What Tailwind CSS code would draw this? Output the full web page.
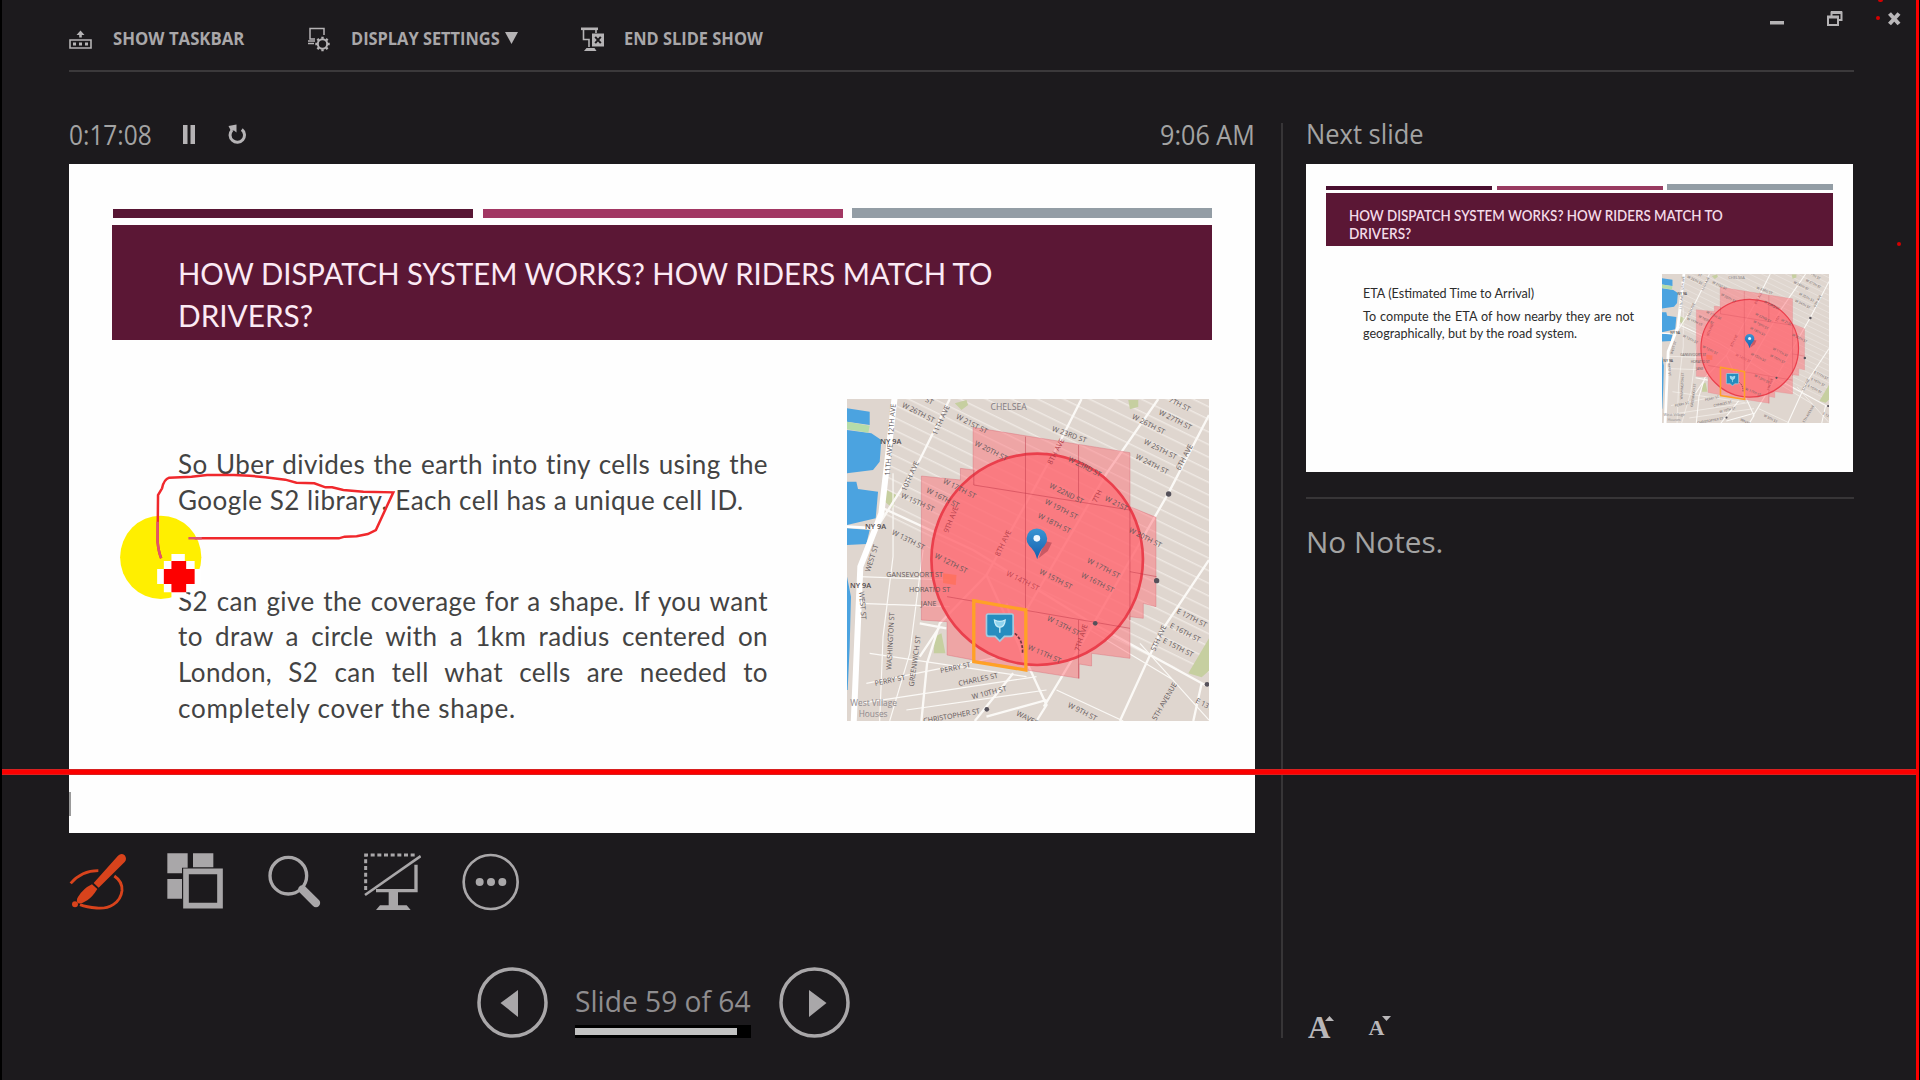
<!DOCTYPE html>
<html lang="en">
<head>
<meta charset="utf-8">
<title>Presenter View</title>
<script src="https://cdn.jsdelivr.net/npm/@tailwindcss/browser@4"></script>
</head>
<body class="bg-[#1c1a1d]">
<div class="relative flex h-[1080px] w-[1920px] flex-col overflow-hidden border-l-2 border-black bg-[#1c1a1d] pl-[67px] font-['Open_Sans',sans-serif] text-[#a3a3a3]">

  <!-- Toolbar -->
  <header class="flex h-[72px] w-[1785px] shrink-0 items-start border-b-2 border-[#3b393b] pt-[26px] text-[18px] leading-[24px] font-bold text-[#a9a7a9]">
    <div class="flex w-[238px] items-start">
      <svg class="mr-[21px] h-[26px] w-[23px]" viewBox="0 0 23 26" fill="none" stroke="#b5b3b5" stroke-width="1.6"><path d="M1 14h21v8H1z"/><path d="M4 16.500h3v3H4zM10 16.500h3v3h-3zM16 16.500h3v3h-3z" fill="#b5b3b5" stroke="none"/><path d="M11.500 4.500l4 4.500h-2.700v2.500h-2.600V9H7.500z" fill="#b5b3b5" stroke="none"/></svg>
      <span class="origin-left scale-x-[0.93] whitespace-nowrap">SHOW TASKBAR</span>
    </div>
    <div class="flex w-[274px] items-start">
      <svg class="mr-5 h-[26px] w-[24px]" viewBox="0 0 24 26" fill="none" stroke="#b5b3b5" stroke-width="1.500"><path d="M8 13H3V2.500h14V9"/><path d="M1 15h7M1 17.500h6" /><circle cx="15.500" cy="18" r="4.700" stroke-width="2"/><path d="M15.500 10.800v2M15.500 23.200v2M8.300 18h2M20.700 18h2M10.400 12.900l1.500 1.500M19.100 21.600l1.500 1.500M10.400 23.100l1.500-1.500M19.100 14.400l1.500-1.500" stroke-width="2.400"/></svg>
      <span class="w-[148px] origin-left scale-x-[0.91] whitespace-nowrap">DISPLAY SETTINGS</span>
      <svg class="mt-[6px] ml-[6px] h-3 w-[13px]" viewBox="0 0 13 12"><path d="M0 0h13L6.500 12z" fill="#b5b3b5"/></svg>
    </div>
    <div class="flex items-start">
      <svg class="mr-[19px] h-[26px] w-[24px]" viewBox="0 0 24 26" fill="none" stroke="#b5b3b5" stroke-width="1.600"><path d="M0 2.800h17" stroke-width="2.600"/><path d="M2.500 4v9.500H8V21M15 4v3"/><path d="M3 25l2.500-3h8l2 3z" fill="#b5b3b5" stroke="none"/><path d="M11 7.500h12v13H11z" fill="#b5b3b5" stroke="none"/><path d="M14.200 10.800l5.600 6.400M19.800 10.800l-5.600 6.400" stroke="#1c1a1d" stroke-width="2"/></svg>
      <span class="origin-left scale-x-[0.912] whitespace-nowrap">END SLIDE SHOW</span>
    </div>
  </header>

  <div class="flex">
    <!-- Current slide -->
    <main class="w-[1186px] shrink-0 pt-[51px]">
      <div class="flex h-[41px] items-start text-[27px] leading-[23px]">
        <span class="w-[114px] origin-left scale-x-[0.905] whitespace-nowrap">0:17:08</span>
        <svg class="mt-[2px] h-5 w-3" viewBox="0 0 12 20"><path d="M0 0h4.500v19H0zM7.500 0H12v19H7.500z" fill="#b5b3b5"/></svg>
        <svg class="mt-[1px] ml-[33px] h-[21px] w-[18px]" viewBox="0 0 18 21" fill="none" stroke="#b5b3b5" stroke-width="3"><path d="M13.800 5.500A7.200 7.200 0 1 1 4 6.200"/><path d="M0.500 2L8.500 0.500V8.500L6 6.500 3 7z" fill="#b5b3b5" stroke="none"/></svg>
        <span class="ml-auto origin-right scale-x-[0.93] whitespace-nowrap">9:06 AM</span>
      </div>

      <section class="h-[669px] bg-[#fefefe] pt-[44px] font-[Lato,sans-serif]">
        <div class="ml-[44px] flex h-[10px] w-[1099px] items-end justify-between">
          <div class="h-[9px] w-[360px] bg-[#581634]"></div>
          <div class="h-[9px] w-[360px] bg-[#a23763]"></div>
          <div class="h-[10px] w-[360px] bg-[#939da5]"></div>
        </div>
        <h1 class="mt-[7px] ml-[43px] h-[115px] w-[1100px] bg-[#5b1735] pt-[27px] pl-[66px] text-[31.500px] leading-[42px] text-[#fbeaf4]">
          <span class="block origin-left scale-x-[0.93] whitespace-nowrap">HOW DISPATCH SYSTEM WORKS? HOW RIDERS MATCH TO</span>
          <span class="block origin-left scale-x-[0.945] whitespace-nowrap">DRIVERS?</span>
        </h1>
        <div class="flex pl-[109px]">
          <div class="w-[590px] pt-[107px] text-[26px] leading-[35.800px] text-[#434343]">
            <p><span class="block tracking-[0.400px] whitespace-nowrap [text-align-last:justify]">So Uber divides the earth into tiny cells using the</span><span class="block tracking-[0.490px] whitespace-nowrap">Google S2 library. Each cell has a unique cell ID.</span></p>
            <p class="pt-[65px] tracking-[0.400px]"><span class="block whitespace-nowrap [text-align-last:justify]">S2 can give the coverage for a shape. If you want</span><span class="block [text-align-last:justify]">to draw a circle with a 1km radius centered on</span><span class="block [text-align-last:justify]">London, S2 can tell what cells are needed to</span><span class="block tracking-[0.760px] whitespace-nowrap">completely cover the shape.</span></p>
          </div>
          <svg class="mt-[59px] ml-[79px] h-[322px] w-[362px]" viewBox="22 27 1085 966" preserveAspectRatio="none">
            <defs>
              <linearGradient id="pin" x1="0" y1="0" x2="0" y2="1"><stop offset="0" stop-color="#3a95d3"/><stop offset="1" stop-color="#165fae"/></linearGradient>
              <pattern id="blocks" width="150" height="34" patternUnits="userSpaceOnUse" patternTransform="rotate(26)"><path d="M0 2H150" stroke="#efe9e4" stroke-width="4"/></pattern>
              <g id="map">
                <path fill="#dfd6cf" d="M22 27H1107V993H22z"/>
                <path fill="url(#blocks)" d="M165 27H1107V870L560 660L120 380z"/>
                <path fill="#4ba3e0" d="M22 55l68 10v40l-68-10zM22 120l73 10 30 20-5 65-20 25-78 10zM22 275h28l5 22 60 8-7 80-86 20zM22 415l68 5-10 42-58 3zM22 560l12 60-4 150-6 130h-2z"/>
                <path fill="#b5dca9" d="M22 95l68 12-4 21-64-10z"/>
                <path fill="#c6cfa0" d="M140 300l30 15-10 40-25-20zM285 740l20-10 12 60h-35zM1107 745l-62 105 40 12 22-20zM345 40l35-10 5 15-20 15zM865 30h30v20l-25 8z"/>
                <g fill="none" stroke="#fbf9f6" stroke-width="7">
                  <path d="M245 993L262 820 300 700 440 555 655 165 725 27M560 840L500 640M440 555L620 945 590 993M560 660L800 250 955 27M612 950L750 720 985 310 1107 75M840 993L960 730 1107 510M330 27L240 210 120 400M120 350L400 480 740 690 1095 885M1085 880L1060 993M240 700L320 715M300 710L240 800M405 993L520 850M440 980L620 930" />
                  <path d="M160 250V500L130 740 120 993M250 480L210 790 150 993M60 560L330 570M60 640L330 650M90 790L560 860M80 880L480 800M60 940L590 860M200 960L620 900M650 900L850 993M750 720L1000 870M900 760L1107 990" stroke-width="3.500"/>
                  <path d="M165 20L125 370 62 530 42 1000" stroke="#fff" stroke-width="18"/>
                  <path d="M22 410L110 415" stroke="#fff" stroke-width="8"/>
                </g>
                <path fill="#ff6b74" fill-opacity=".46" stroke="#d96873" stroke-opacity=".6" stroke-width="2" d="M400 112L870 188V350L948 382V650L910 640V685L870 680V805L755 790V828L718 822V865L560 840 322 795V695L245 690V258L362 270V235L400 240z"/>
                <circle cx="592" cy="508" r="317" fill="#ff6a72" fill-opacity=".7" stroke="#ea3f4c" stroke-width="8"/>
                <path d="M557 140V660M402 285L870 360M716 165V330M402 240V285M322 620L870 715M716 690V865M870 350V690M870 545L950 560" fill="none" stroke="#b93445" stroke-width="2" stroke-opacity=".7"/>
                <path fill="#ff6f55" fill-opacity=".7" d="M310 550l40 5-2 30-38-6z"/>
                <g font-family="Open Sans, sans-serif" font-size="21.500" fill="#5f585a">
                  <text transform="translate(185 50) rotate(27)">W 26TH ST</text><text transform="translate(255 34) rotate(27)">ST</text>
                  <text transform="translate(347 85) rotate(27)">W 21ST ST</text><text transform="translate(403 165) rotate(27)">W 20TH ST</text>
                  <text transform="translate(635 122) rotate(20)">W 23RD ST</text><text transform="translate(875 85) rotate(27)">W 26TH ST</text>
                  <text transform="translate(955 72) rotate(27)">W 27TH ST</text><text transform="translate(985 34) rotate(27)">7TH ST</text>
                  <text transform="translate(910 160) rotate(27)">W 25TH ST</text><text transform="translate(885 205) rotate(27)">W 24TH ST</text>
                  <text transform="translate(308 278) rotate(27)">W 17TH ST</text><text transform="translate(258 306) rotate(27)">W 16TH ST</text>
                  <text transform="translate(182 322) rotate(24)">W 15TH ST</text><text transform="translate(155 432) rotate(27)">W 13TH ST</text>
                  <text transform="translate(283 502) rotate(27)">W 12TH ST</text><text transform="translate(627 292) rotate(27)">W 22ND ST</text>
                  <text transform="translate(613 340) rotate(27)">W 19TH ST</text><text transform="translate(592 382) rotate(27)">W 18TH ST</text>
                  <text transform="translate(683 212) rotate(27)">W 23RD ST</text><text transform="translate(793 330) rotate(27)">W 21ST</text>
                  <text transform="translate(865 425) rotate(27)">W 20TH ST</text><text transform="translate(740 517) rotate(27)">W 17TH ST</text>
                  <text transform="translate(722 560) rotate(27)">W 16TH ST</text><text transform="translate(597 550) rotate(27)">W 15TH ST</text>
                  <text transform="translate(498 555) rotate(27)" fill="#c04450">W 14TH ST</text><text transform="translate(620 690) rotate(27)">W 13TH ST</text>
                  <text transform="translate(562 777) rotate(24)">W 11TH ST</text><text x="140" y="560">GANSEVOORT ST</text>
                  <text x="208" y="605">HORATIO ST</text><text x="243" y="648">JANE</text>
                  <text transform="translate(303 850) rotate(-12)">PERRY ST</text><text transform="translate(107 888) rotate(-12)">PERRY ST</text>
                  <text transform="translate(358 888) rotate(-12)">CHARLES ST</text><text transform="translate(398 928) rotate(-14)">W 10TH ST</text>
                  <text transform="translate(252 1000) rotate(-10)">CHRISTOPHER ST</text><text transform="translate(682 950) rotate(27)">W 9TH ST</text>
                  <text transform="translate(528 975) rotate(27)">WAVERLY</text><text transform="translate(1008 668) rotate(27)">E 17TH ST</text>
                  <text transform="translate(988 712) rotate(27)">E 16TH ST</text><text transform="translate(967 757) rotate(27)">E 15TH ST</text>
                  <text transform="translate(1065 937) rotate(27)">E 13TH</text><text transform="translate(155 840) rotate(-87)">WASHINGTON ST</text>
                  <text transform="translate(222 890) rotate(-82)">GREENWICH ST</text><text transform="translate(90 547) rotate(-72)">WEST ST</text>
                  <text transform="translate(58 605) rotate(85)">WEST ST</text><text transform="translate(150 258) rotate(-85)">11TH AVE</text>
                  <text transform="translate(160 138) rotate(-85)">12TH AVE</text><text transform="translate(290 137) rotate(-65)">11TH AVE</text>
                  <text transform="translate(198 305) rotate(-65)">10TH AVE</text><text transform="translate(1020 242) rotate(-62)">6TH AVE</text>
                  <text transform="translate(945 785) rotate(-65)">5TH AVE</text><text transform="translate(948 993) rotate(-60)">5TH AVENUE</text>
                  <g fill="#b23d49"><text transform="translate(635 225) rotate(-62)">8TH AVE</text><text transform="translate(325 430) rotate(-68)">9TH AVE</text><text transform="translate(478 500) rotate(-64)">8TH AVE</text><text transform="translate(770 340) rotate(-64)">7TH</text><text transform="translate(718 785) rotate(-72)">7TH AVE</text></g>
                  <text x="452" y="60" font-size="26" fill="#7f7a80">CHELSEA</text>
                  <g font-weight="600" fill="#4f4a4d" font-size="22"><text x="122" y="162">NY 9A</text><text x="76" y="417">NY 9A</text><text x="31" y="595">NY 9A</text></g>
                  <g font-size="25" fill="#8d888c"><text x="32" y="949">West Village</text><text x="57" y="982">Houses</text></g>
                </g>
                <path d="M525 730Q550 750 548 790" stroke="#73363f" stroke-width="5" stroke-dasharray="9 5" fill="none"/>
                <g fill="#55515a"><circle cx="986" cy="312" r="8"/><circle cx="950" cy="572" r="8"/><circle cx="766" cy="700" r="7"/><circle cx="441" cy="958" r="7"/><circle cx="1101" cy="883" r="7"/></g>
                <path fill="none" stroke="#ffa126" stroke-width="10" d="M402 632L558 660V840L402 815z"/>
                <path d="M445 672h70q5 0 5 5v54q0 8-8 8h-18l-14 14-14-14h-18q-8 0-8-8v-54q0-5 5-5z" fill="#268dbf" stroke="#a4cbe0" stroke-width="5"/>
                <path d="M464 690q16 8 32 0-1 20-16 22-15-2-16-22zM480 710v18" fill="#8ed3ee" stroke="#c9edf8" stroke-width="4"/>
                <path d="M596 505l28-22 12-25-20-5z" fill="#a33c4a" fill-opacity=".55"/>
                <path d="M592 508Q586 482 568 467A31 31 0 1 1 614 467Q598 484 592 508z" fill="url(#pin)"/>
                <circle cx="591" cy="445" r="10" fill="#f1f8ff"/>
              </g>
            </defs>
            <use href="#map"/>
          </svg>
        </div>
      </section>

      <!-- Slide tools -->
      <div class="flex gap-10 pt-[20px]">
        <svg class="size-[58px]" viewBox="27 339 174 174" fill="none"><path d="M32 430Q65 392 115 392M163 408Q188 425 186 452C182 490 145 508 110 504Q80 502 60 494" stroke="#d8431c" stroke-width="8.500"/><path d="M101 429L174 347Q184 338 194 346 202 356 194 366L116 443zM96 433L112 447Q98 470 82 481 66 492 54 490 47 482 54 471 70 445 96 433z" fill="#d8431c"/><circle cx="45" cy="493" r="9" fill="#d8431c"/></svg>
        <svg class="size-[58px]" viewBox="321 339 174 174"><path d="M322 340h61v43h-17v17h-44zM399 340h61v42h-61zM322 417h44v59h-44z" fill="#a9a7a9"/><path d="M378 394h102v103H378z" fill="none" stroke="#a9a7a9" stroke-width="17"/></svg>
        <svg class="size-[58px]" viewBox="615 339 174 174" fill="none" stroke="#a9a7a9"><circle cx="685" cy="407" r="55" stroke-width="10"/><path d="M727 448L768 489" stroke-width="25" stroke-linecap="round"/></svg>
        <svg class="size-[58px]" viewBox="909 339 174 174" fill="none" stroke="#a9a7a9"><path d="M917 450V345H1072" stroke-width="9" stroke-dasharray="12 8"/><path d="M915 465L1082 348" stroke-width="8"/><path d="M1068 374V452H948" stroke-width="10"/><path d="M986 452h28v44h26l12 14H948l12-14h26z" fill="#a9a7a9" stroke="none"/></svg>
        <svg class="size-[58px]" viewBox="1203 339 174 174"><circle cx="1292" cy="426" r="81" fill="none" stroke="#a9a7a9" stroke-width="8"/><g fill="#a9a7a9"><circle cx="1259" cy="426" r="12"/><circle cx="1293" cy="426" r="12"/><circle cx="1327" cy="426" r="12"/></g></svg>
      </div>

      <!-- Slide navigation -->
      <div class="ml-[408px] flex pt-[56px]">
        <svg class="size-[71px]" viewBox="0 0 71 71"><circle cx="35.500" cy="35.500" r="33.500" fill="none" stroke="#a9a7a9" stroke-width="3.500"/><path d="M23.500 36L41 23v27z" fill="#a9a7a9"/></svg>
        <div class="ml-[27px] w-[176px] pt-[14px]">
          <div class="origin-left scale-x-[0.955] text-[29.500px] leading-[39px] whitespace-nowrap text-[#8f8d8f]">Slide 59 of 64</div>
          <div class="mt-[5px] h-[13px] bg-black py-[3px]"><div class="h-[7px] bg-[#c2c2c2]" style="width:92.2%"></div></div>
        </div>
        <svg class="ml-[28px] size-[71px]" viewBox="0 0 71 71"><circle cx="35.500" cy="35.500" r="33.500" fill="none" stroke="#a9a7a9" stroke-width="3.500"/><path d="M47.500 36L30 23v27z" fill="#a9a7a9"/></svg>
      </div>
    </main>

    <!-- Next slide and notes -->
    <aside class="mt-[51px] ml-[26px] flex h-[915px] w-[573px] flex-col border-l-2 border-[#373537] pl-[23px]">
      <div class="h-[41px] origin-left scale-x-[0.945] text-[27px] leading-[22px] whitespace-nowrap">Next slide</div>
      <section class="h-[308px] w-[547px] shrink-0 bg-[#fefefe] pt-[20px] font-[Lato,sans-serif]">
        <div class="ml-[20px] flex h-[6px] w-[507px] items-end justify-between">
          <div class="h-[4px] w-[166px] bg-[#4a1030]"></div>
          <div class="h-[4px] w-[166px] bg-[#983a60]"></div>
          <div class="h-[6px] w-[166px] bg-[#939da5]"></div>
        </div>
        <h2 class="mt-[3px] ml-[20px] h-[53px] w-[507px] bg-[#5b1735] pt-[14px] pl-[23px] text-[14.300px] leading-[18.300px] font-semibold text-[#f3dbe8]">
          <span class="block origin-left scale-x-[0.935] whitespace-nowrap">HOW DISPATCH SYSTEM WORKS? HOW RIDERS MATCH TO</span>
          <span class="block origin-left scale-x-[0.95] whitespace-nowrap">DRIVERS?</span>
        </h2>
        <div class="flex pl-[57px]">
          <div class="w-[271px] pt-[39px] text-[12.600px] leading-[17px] text-[#2c2c2c]">
            <p class="whitespace-nowrap">ETA (Estimated Time to Arrival)</p>
            <p class="pt-[6px]"><span class="block [text-align-last:justify]">To compute the ETA of how nearby they are not</span><span class="block whitespace-nowrap">geographically, but by the road system.</span></p>
          </div>
          <svg class="mt-[28px] ml-[28px] h-[149px] w-[167px]" viewBox="22 27 1085 966" preserveAspectRatio="none"><use href="#map"/></svg>
        </div>
      </section>
      <div class="mt-[25px] w-[548px] border-t-2 border-[#373537] pt-[24px] text-[29.700px] leading-[38px] whitespace-nowrap">No Notes.</div>
      <div class="mt-auto ml-[2px] flex items-end font-['Liberation_Serif',serif] leading-[20px] font-bold text-[#b9b7b9]">
        <span class="text-[31px]">A</span>
        <svg class="-ml-[5px] h-[22px] w-[9px]" viewBox="0 0 9 22"><path d="M0 5L4.500 0 9 5z" fill="#b9b7b9"/></svg>
        <span class="ml-[34px] text-[22px]">A</span>
        <svg class="-ml-[2px] h-[22px] w-[9px]" viewBox="0 0 9 22"><path d="M0 0h9L4.500 5z" fill="#b9b7b9"/></svg>
      </div>
    </aside>
  </div>

  <!-- Window controls -->
  <div class="absolute top-[11px] right-[19px] flex items-center">
    <svg class="h-[15px] w-[14px]" viewBox="0 0 14 15"><path d="M0 10h14v3.500H0z" fill="#b5b3b5"/></svg>
    <svg class="ml-[43px] h-[15px] w-[16px]" viewBox="0 0 16 15" fill="none" stroke="#b5b3b5"><path d="M4.500 5V1.500h10V9H11" stroke-width="2"/><path d="M1 6h10v8H1z" stroke-width="2"/><path d="M0 6h12M4 1.500h11" stroke-width="3"/></svg>
    <svg class="ml-[45px] h-[15px] w-[13px]" viewBox="0 0 13 15"><path d="M1.500 2.500l9.500 10.500M11 2.500L1.500 13" stroke="#b9b7b9" stroke-width="4"/></svg>
  </div>

  <!-- Pen annotation, spotlight and cursor -->
  <svg class="absolute top-[430px] left-[98px] h-[320px] w-[700px]" viewBox="0 0 1568 960" preserveAspectRatio="none" fill="none">
    <ellipse cx="136" cy="382" rx="91" ry="125" fill="#ffef00"/>
    <path d="M212 325H535L548 320 575 319 600 312 618 300 657 187 590 185 545 180 520 172 505 172 480 160 440 158 415 149 370 142 335 137 300 135H240L205 140 155 143Q143 148 139 175L130 195 129 335Q131 365 137 385" stroke="#f0282c" stroke-width="2.500" vector-effect="non-scaling-stroke"/>
    <path d="M198 325H228M129 275V335Q131 365 137 385" stroke="#e0556e" stroke-width="2.500" vector-effect="non-scaling-stroke"/>
    <path d="M160 372h30v21h22v24h15v45h-15v25h-19v16h-33v-16h-17v-25h-15v-45h15v-24h17z" fill="#fff"/>
    <path d="M160 393h33v24h19v45h-19v25h-33v-25h-17v-45h17z" fill="#fd0000"/>
  </svg>
  <div class="absolute top-[792px] left-[67px] h-6 w-[2px] bg-[#9a9a9a]"></div>
  <div class="absolute top-[769px] left-0 h-[6px] w-[1915px] border-y border-[#d82020] bg-[#fb0000]"></div>
  <div class="absolute top-0 right-0 h-full w-1 border-r border-black bg-[#fb0000]"></div>
  <div class="absolute top-[-2px] left-[1876px] h-1 w-[5px] rounded-full bg-[#d40000]"></div>
  <div class="absolute top-[16px] left-[1874px] size-1 rounded-full bg-[#d40000]"></div>
  <div class="absolute top-[242px] left-[1895px] size-1 rounded-full bg-[#d40000]"></div>
</div>
</body>
</html>
